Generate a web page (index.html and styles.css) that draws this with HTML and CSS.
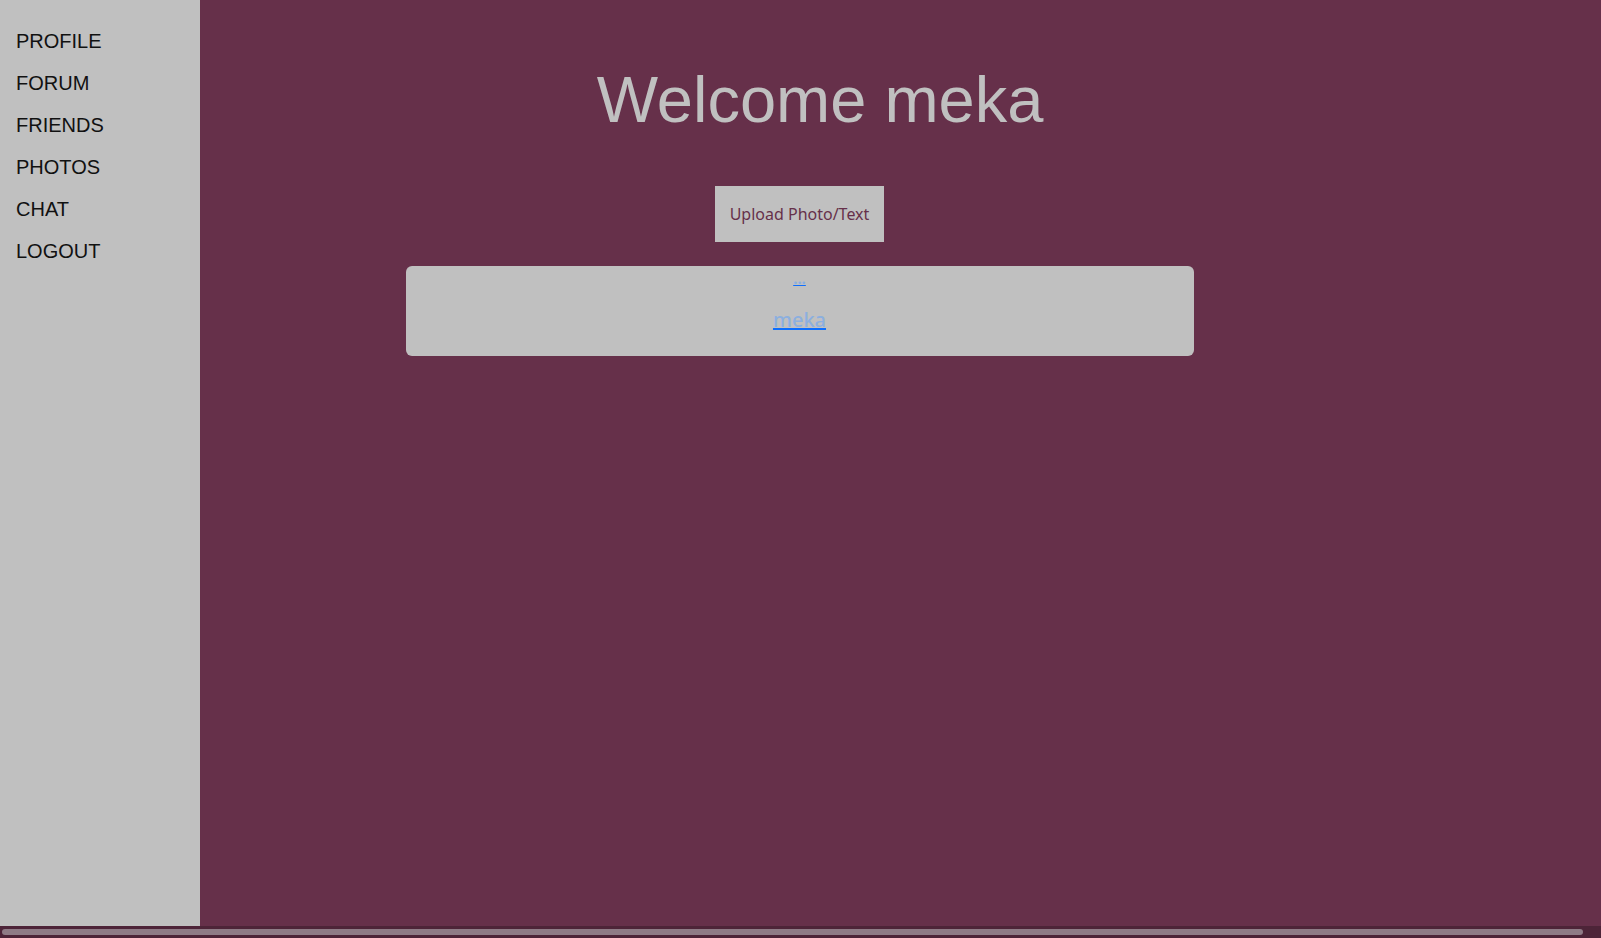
FILE: index.html
```html
<!DOCTYPE html>
<html lang="en">
<head>
  <meta charset="UTF-8" />
  <meta name="viewport" content="width=device-width, initial-scale=1.0" />
  <title>Home</title>
  <link rel="stylesheet" href="styles.css">
</head>
<body>

  <div id="layout">
    <div id="menu">
      <ul>
        <li><a href="#">PROFILE</a></li>
        <li><a href="#">FORUM</a></li>
        <li><a href="#">FRIENDS</a></li>
        <li><a href="#">PHOTOS</a></li>
        <li><a href="#">CHAT</a></li>
        <li><a href="#">LOGOUT</a></li>
      </ul>
    </div>

    <div id="conteudo">
      <h1 class="welcome">Welcome meka</h1>

      <button class="btn-upload">Upload Photo/Text</button>

      <div class="post">
        <a href="#" class="post-more"><span>...</span></a>
        <a href="#" class="post-user"><span>meka</span></a>
      </div>
    </div>
  </div>

  <!-- horizontal scrollbar -->
  <div class="hscroll"><div class="hscroll-thumb"></div></div>

</body>
</html>
```

FILE: styles.css
```css
* { margin: 0; padding: 0; box-sizing: border-box; }

html, body { height: 100%; }

body {
  font-family: "Liberation Sans", Arial, sans-serif;
  background-color: #66304a;
  display: flex;
  flex-direction: column;
  overflow: hidden;
}

#layout {
  display: flex;
  flex: 1;
}

#menu {
  flex: 0 0 200px;
  background-color: #c0c0c0;
  padding: 20px 16px;
}

#menu ul { list-style: none; }
#menu ul li {
  font-size: 20px;
  line-height: 42px;
}
#menu ul li a {
  color: #111;
  text-decoration: none;
}

#conteudo {
  flex-grow: 1;
  padding: 63px 202px 0 0;
}

.welcome {
  font-size: 65px;
  font-weight: normal;
  line-height: 1.15;
  color: #c0c0c0;
  text-align: center;
  padding-left: 41px;
}

.btn-upload {
  display: block;
  margin: 48px auto 0;
  width: 169px;
  height: 56px;
  border: none;
  background-color: #c0c0c0;
  color: #66304a;
  font-family: "Noto Sans", sans-serif;
  font-size: 16px;
  cursor: pointer;
}

.post {
  width: 788px;
  margin: 24px auto 0;
  padding: 2px 16px 24px;
  background-color: #c0c0c0;
  border-radius: 6px;
  text-align: center;
  font-family: "Noto Sans", sans-serif;
}

.post a {
  display: block;
  color: #0d6efd;
}
.post a span { color: #8cafdf; }

.post-more {
  font-size: 15px;
  line-height: 21px;
  font-weight: bold;
}

.post-user {
  margin-top: 19px;
  font-size: 20px;
  line-height: 24px;
  font-weight: 500;
}

.hscroll {
  flex: 0 0 12px;
  background-color: #4d2438;
  padding: 3px 18px 3px 2px;
}
.hscroll-thumb {
  height: 6px;
  background-color: #8f7b86;
  border-radius: 3px;
}
```
